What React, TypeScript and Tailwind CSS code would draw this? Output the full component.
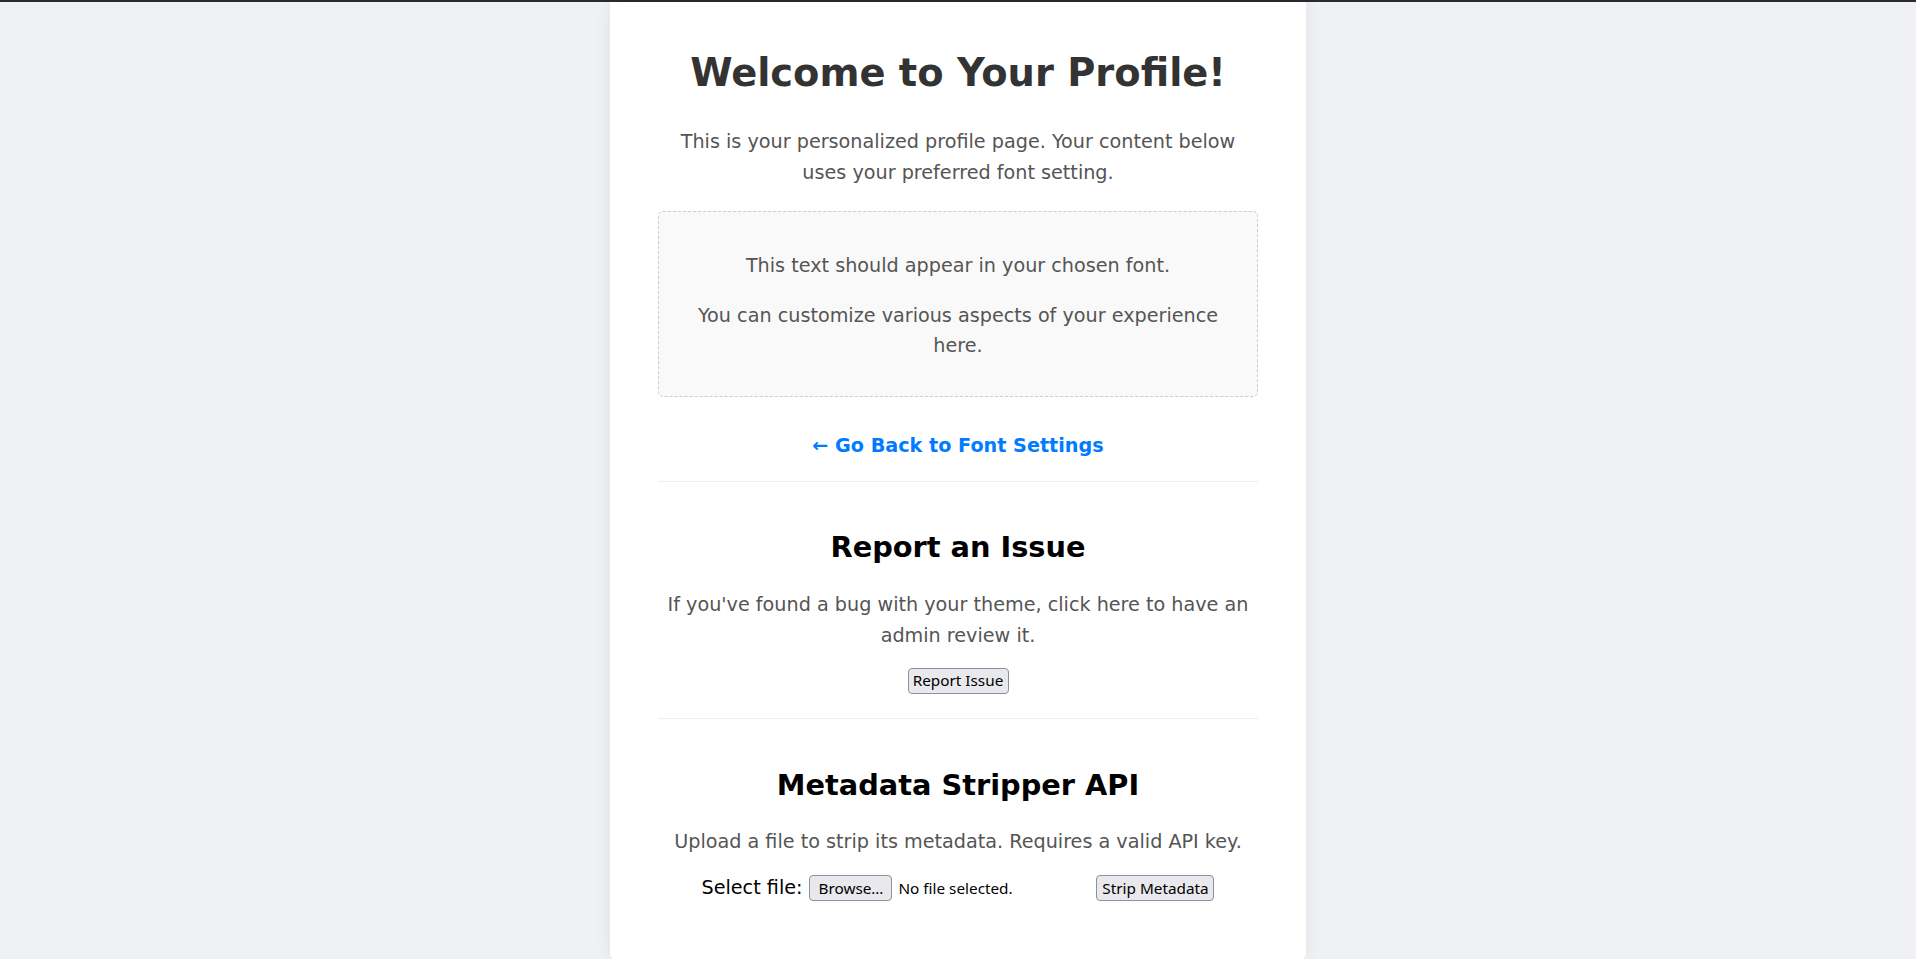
import React from 'react'

const FONT = { fontFamily: '"DejaVu Sans", Verdana, sans-serif' }
const CONTROL = { fontFamily: '"Noto Sans", "Open Sans", sans-serif' }

function NativeButton({ label, width }: { label: string; width: string }) {
  return (
    <button
      type="button"
      className={`flex h-[26px] ${width} items-center justify-center whitespace-nowrap rounded-[4px] border border-[#8f8f9d] bg-[#e9e9ed] px-0 text-[15.3px] leading-none text-black`}
      style={CONTROL}
    >
      {label}
    </button>
  )
}

export default function App() {
  return (
    <div className="flex min-h-screen flex-col bg-[#f0f1f5]" style={FONT}>
      <div className="h-[2px] w-full bg-[#2b2a33]" />
      <main className="mx-auto flex w-[696px] flex-col items-center rounded-b-lg bg-white px-12 pb-[58px] pt-[48px] text-center shadow-[0_0_18px_rgba(0,0,0,0.07)]">
        <h1 className="text-[38.4px] font-bold leading-[46px] text-[#333]">
          Welcome to Your Profile!
        </h1>
        <p className="mt-[31px] text-[19.2px] leading-[1.6] text-[#555]">
          This is your personalized profile page. Your content below uses your preferred font
          setting.
        </p>

        <div className="mt-[22.5px] w-full rounded-[5px] border border-dashed border-[#ccc] bg-[#f9f9f9] px-5 pb-[14.5px] pt-[19.5px] text-[19.2px] leading-[1.6] text-[#555]">
          <p className="my-[19.2px]">This text should appear in your chosen font.</p>
          <p className="my-[19.2px]">You can customize various aspects of your experience here.</p>
        </div>

        <a
          href="#"
          className="mt-[34px] text-[19.2px] font-bold leading-[1.6] text-[#007bff] no-underline"
        >
          ← Go Back to Font Settings
        </a>

        <hr className="mt-[19.2px] w-full border-0 border-t border-[#eee]" />

        <h2 className="mt-[48.9px] text-[28.8px] font-bold leading-[34.56px] text-black">
          Report an Issue
        </h2>
        <p className="mt-[25.1px] text-[19.2px] leading-[1.6] text-[#555]">
          If you've found a bug with your theme, click here to have an admin review it.
        </p>
        <div className="mt-[16px]">
          <NativeButton label="Report Issue" width="w-[101px]" />
        </div>

        <hr className="mt-[24.5px] w-full border-0 border-t border-[#eee]" />

        <h2 className="mt-[48.7px] text-[28.8px] font-bold leading-[34.56px] text-black">
          Metadata Stripper API
        </h2>
        <p className="mt-[24.5px] text-[19.2px] leading-[1.6] text-[#555]">
          Upload a file to strip its metadata. Requires a valid API key.
        </p>
        <form className="mt-[17.7px] flex items-center justify-center">
          <label className="text-[19.2px] leading-[26px] text-black">Select file:</label>
          <div className="ml-[7px] flex w-[283px] items-center">
            <NativeButton label="Browse…" width="w-[83px]" />
            <span className="ml-[6px] whitespace-nowrap text-[15.3px] text-black" style={CONTROL}>
              No file selected.
            </span>
          </div>
          <div className="ml-[4px]">
            <NativeButton label="Strip Metadata" width="w-[118px]" />
          </div>
        </form>
        <div className="h-[2px]" />
      </main>
    </div>
  )
}
